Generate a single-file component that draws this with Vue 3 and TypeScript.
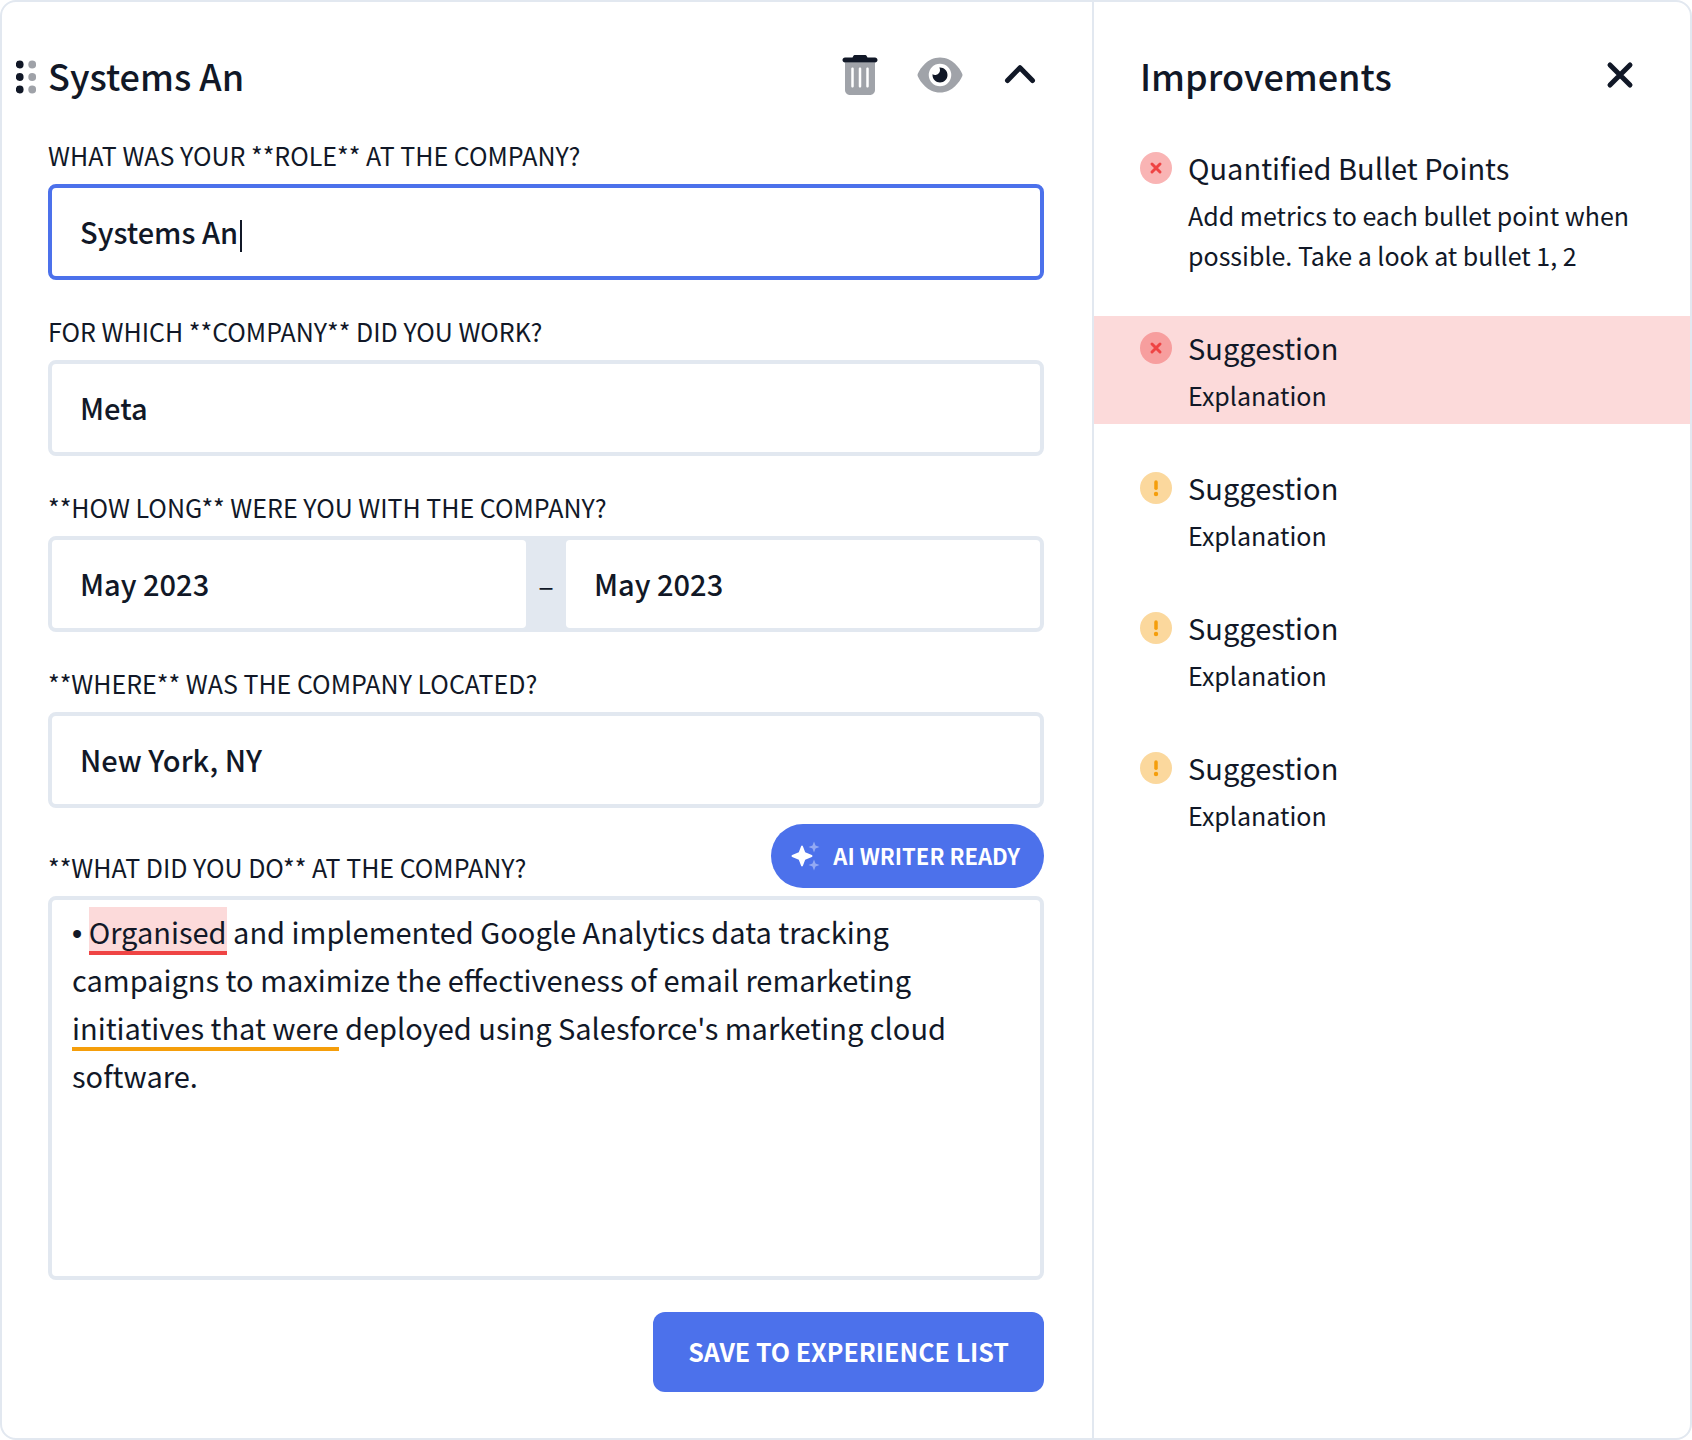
<script setup lang="ts">
import { onMounted, ref } from 'vue'

type Severity = 'error' | 'warning'

interface Improvement {
  title: string
  detail: string
  severity: Severity
  active?: boolean
}

const role = ref('Systems An')
const company = ref('Meta')
const startDate = ref('May 2023')
const endDate = ref('May 2023')
const location = ref('New York, NY')
const roleInput = ref<HTMLInputElement | null>(null)

const improvements: Improvement[] = [
  {
    title: 'Quantified Bullet Points',
    detail: 'Add metrics to each bullet point when possible. Take a look at bullet 1, 2',
    severity: 'error',
  },
  { title: 'Suggestion', detail: 'Explanation', severity: 'error', active: true },
  { title: 'Suggestion', detail: 'Explanation', severity: 'warning' },
  { title: 'Suggestion', detail: 'Explanation', severity: 'warning' },
  { title: 'Suggestion', detail: 'Explanation', severity: 'warning' },
]

onMounted(() => roleInput.value?.focus())
</script>

<template>
  <main class="card">
    <form class="form" @submit.prevent>
      <header class="head form-head">
        <button type="button" class="icon-button grip" aria-label="Reorder">
          <svg width="20" height="38" viewBox="0 -4 20 38">
            <g fill="currentColor">
              <circle cx="3.700" cy="4.500" r="3.900" /><circle cx="3.700" cy="17" r="3.900" /><circle cx="3.700" cy="29.500" r="3.900" />
            </g>
            <g fill="currentColor" opacity="0.4">
              <circle cx="16.200" cy="4.500" r="3.900" /><circle cx="16.200" cy="17" r="3.900" /><circle cx="16.200" cy="29.500" r="3.900" />
            </g>
          </svg>
        </button>
        <h1 class="title">{{ role }}</h1>
        <div class="actions">
          <button type="button" class="icon-button" aria-label="Delete">
            <svg width="36" height="40" viewBox="0 0 448 512" fill="currentColor">
              <path opacity="0.4" fill-rule="evenodd" d="M32 96V448c0 35.300 28.700 64 64 64H352c35.300 0 64-28.700 64-64V96H32zM128 160c8.800 0 16 7.200 16 16V400c0 8.800-7.200 16-16 16s-16-7.200-16-16V176c0-8.800 7.200-16 16-16zm96 0c8.800 0 16 7.200 16 16V400c0 8.800-7.200 16-16 16s-16-7.200-16-16V176c0-8.800 7.200-16 16-16zm96 0c8.800 0 16 7.200 16 16V400c0 8.800-7.200 16-16 16s-16-7.200-16-16V176c0-8.800 7.200-16 16-16z" />
              <path d="M135.200 17.700L128 32H32C14.300 32 0 46.300 0 64S14.300 96 32 96H416c17.700 0 32-14.300 32-32s-14.300-32-32-32H320l-7.200-14.300C307.400 6.800 296.300 0 284.200 0H163.800c-12.100 0-23.200 6.800-28.600 17.700z" />
            </svg>
          </button>
          <button type="button" class="icon-button" aria-label="Preview">
            <svg width="46" height="40" viewBox="0 0 576 512" fill="currentColor">
              <path opacity="0.4" fill-rule="evenodd" d="M288 32c-80.800 0-145.500 36.800-192.600 80.600C48.600 156 17.300 208 2.500 243.700c-3.300 7.900-3.300 16.700 0 24.600C17.300 304 48.600 356 95.400 399.400C142.500 443.200 207.200 480 288 480s145.500-36.800 192.600-80.600c46.800-43.500 78.100-95.400 93-131.100c3.300-7.900 3.300-16.700 0-24.600c-14.900-35.700-46.200-87.700-93-131.100C433.500 68.800 368.800 32 288 32zM144 256a144 144 0 1 1 288 0 144 144 0 1 1-288 0z" />
              <path d="M288 192c0 35.300-28.700 64-64 64-11.500 0-22.300-3-31.700-8.400-.2 2.800-.3 5.500-.3 8.400 0 53 43 96 96 96s96-43 96-96-43-96-96-96c-2.800 0-5.600.1-8.400.3 5.300 9.300 8.400 20.100 8.400 31.700z" />
            </svg>
          </button>
          <button type="button" class="icon-button" aria-label="Collapse">
            <svg width="40" height="40" viewBox="0 0 40 40" fill="none" stroke="currentColor" stroke-width="5" stroke-linecap="round" stroke-linejoin="round">
              <path d="M7.500 25.500L20 12.700L32.500 25.500" />
            </svg>
          </button>
        </div>
      </header>

      <div class="field">
        <label for="role">WHAT WAS YOUR **ROLE** AT THE COMPANY?</label>
        <div class="typing">
          <input id="role" ref="roleInput" v-model="role" class="box text active" type="text" />
          <div class="caret-layer text" aria-hidden="true">
            <span class="ghost">{{ role }}</span><span class="caret"></span>
          </div>
        </div>
      </div>

      <div class="field">
        <label for="company">FOR WHICH **COMPANY** DID YOU WORK?</label>
        <input id="company" v-model="company" class="box text" type="text" />
      </div>

      <div class="field">
        <label for="start">**HOW LONG** WERE YOU WITH THE COMPANY?</label>
        <div class="box range">
          <input id="start" v-model="startDate" class="text" type="text" />
          <span class="dash">–</span>
          <input v-model="endDate" class="text" type="text" aria-label="End date" />
        </div>
      </div>

      <div class="field">
        <label for="location">**WHERE** WAS THE COMPANY LOCATED?</label>
        <input id="location" v-model="location" class="box text" type="text" />
      </div>

      <div class="field duties">
        <div class="duties-head">
          <label id="duties-label">**WHAT DID YOU DO** AT THE COMPANY?</label>
          <button type="button" class="ai">
            <svg width="30" height="30" viewBox="0 0 30 30" fill="#fff">
              <path d="M11 4.500Q11.600 4.500 11.900 5.200L14.200 11.300L20.800 14Q21.500 14.400 21.500 15T20.800 16L14.200 18.700L11.900 24.800Q11.600 25.500 11 25.500T10.100 24.800L7.800 18.700L1.200 16Q.5 15.600 .5 15T1.200 14L7.800 11.300L10.100 5.200Q10.400 4.500 11 4.500z" />
              <g opacity="0.4">
                <path d="M23 .5L24.500 4.500L28.500 6L24.500 7.500L23 11.500L21.500 7.500L17.500 6L21.500 4.500z" />
                <path d="M23 18.500L24.500 22.500L28.500 24L24.500 25.500L23 29.500L21.500 25.500L17.500 24L21.500 22.500z" />
              </g>
            </svg>
            <span>AI WRITER READY</span>
          </button>
        </div>
        <div class="box editor" role="textbox" aria-multiline="true" aria-labelledby="duties-label" contenteditable="true" spellcheck="false"><span class="bullet">•</span> <span class="mark error">Organised</span> and implemented Google Analytics data tracking campaigns to maximize the effectiveness of email remarketing <span class="mark warning">initiatives that were</span> deployed using Salesforce's marketing cloud software.</div>
      </div>

      <button type="submit" class="save">SAVE TO EXPERIENCE LIST</button>
    </form>

    <aside class="side">
      <header class="head side-head">
        <h2 class="title">Improvements</h2>
        <button type="button" class="icon-button" aria-label="Close">
          <svg width="40" height="40" viewBox="0 0 40 40" fill="none" stroke="currentColor" stroke-width="5" stroke-linecap="round">
            <path d="M10 10L30 30M30 10L10 30" />
          </svg>
        </button>
      </header>
      <ul class="list">
        <li v-for="(item, i) in improvements" :key="i" class="item" :class="{ highlighted: item.active }">
          <svg class="badge" :class="item.severity" width="32" height="32" viewBox="0 0 32 32" fill="none" stroke="currentColor" stroke-linecap="round">
            <circle cx="16" cy="16" r="16" fill="currentColor" stroke="none" opacity="0.4" />
            <path v-if="item.severity === 'error'" stroke-width="3" d="M12 12L20 20M20 12L12 20" />
            <template v-else>
              <path stroke-width="3.500" d="M16 10V16.200" />
              <circle cx="16" cy="22" r="2.200" fill="currentColor" stroke="none" />
            </template>
          </svg>
          <div class="copy">
            <h3>{{ item.title }}</h3>
            <p>{{ item.detail }}</p>
          </div>
        </li>
      </ul>
    </aside>
  </main>
</template>

<style>
body {
  margin: 0;
  background: #fff;
}
</style>

<style scoped>
* {
  box-sizing: border-box;
}

.card {
  display: flex;
  min-height: 100vh;
  border: 2px solid #e2e8f0;
  border-radius: 16px;
  overflow: hidden;
  background: #fff;
  color: #111827;
  font-family: 'Noto Sans CJK SC', 'Noto Sans', sans-serif;
  font-size: 29px;
}

button,
input {
  font: inherit;
  color: inherit;
}

button {
  border: 0;
  padding: 0;
  background: none;
  cursor: pointer;
}

h1,
h2,
h3,
p,
ul {
  margin: 0;
  padding: 0;
}

.form {
  flex: 1;
  min-width: 0;
  display: flex;
  flex-direction: column;
  gap: 32px;
  padding: 46px 48px 46px 46px;
}

.head {
  display: flex;
  align-items: center;
  height: 56px;
  padding-bottom: 2px;
}

.form-head {
  gap: 12px;
  margin-left: -32px;
}

.title {
  flex: 1;
  font-size: 36px;
  line-height: 54px;
  font-weight: 500;
}

.actions {
  display: flex;
  gap: 32px;
}

.icon-button {
  display: flex;
  align-items: center;
  justify-content: center;
  width: 48px;
  height: 54px;
}

.grip {
  width: 20px;
  cursor: grab;
}

.field {
  display: flex;
  flex-direction: column;
  gap: 8px;
}

label {
  padding-bottom: 2px;
  font-size: 25px;
  line-height: 38px;
}

.box {
  width: 100%;
  border: 4px solid #e2e8f0;
  border-radius: 8px;
  background: #fff;
}

.text {
  height: 96px;
  padding: 0 28px 2px;
  outline: 0;
  font-weight: 500;
}

.text.active {
  border-color: #4c71eb;
  caret-color: transparent;
}

.typing {
  position: relative;
  display: flex;
}

/* Thick caret that follows the typed text */
.caret-layer {
  position: absolute;
  inset: 0;
  display: flex;
  align-items: center;
  gap: 2px;
  padding: 8px 32px 0;
  pointer-events: none;
}

.ghost {
  visibility: hidden;
  white-space: pre;
}

.caret {
  width: 2px;
  height: 32px;
  background: #111827;
}

.range {
  display: flex;
  background: #e2e8f0;
}

.range .text {
  flex: 1;
  min-width: 0;
  height: 88px;
  border: 0;
  border-radius: 4px;
  background: #fff;
}

.dash {
  width: 40px;
  line-height: 88px;
  text-align: center;
}

.duties {
  margin-top: -16px;
}

.duties-head {
  display: flex;
  justify-content: space-between;
  align-items: flex-end;
}

.ai {
  display: flex;
  align-items: center;
  gap: 12px;
  height: 64px;
  padding: 0 24px 0 20px;
  border-radius: 32px;
  background: #4c71eb;
  color: #fff;
  font-size: 22px;
  font-weight: 700;
}

.ai span {
  padding-bottom: 2px;
}

.editor {
  height: 384px;
  padding: 7px 20px;
  line-height: 48px;
  outline: 0;
}

.bullet {
  font-family: 'Liberation Sans', Arial, sans-serif;
  line-height: 1;
}

.mark {
  padding: 3px 0;
}

.mark.error {
  background: rgba(239, 68, 68, 0.2);
  box-shadow: inset 0 -4px #ef4444;
}

.mark.warning {
  box-shadow: inset 0 -4px #f59e0b;
}

.save {
  align-self: flex-end;
  height: 80px;
  padding: 0 35px 2px;
  border-radius: 12px;
  background: #4c71eb;
  color: #fff;
  font-size: 25px;
  font-weight: 700;
}

.side {
  width: 598px;
  flex-shrink: 0;
  border-left: 2px solid #e2e8f0;
}

.side-head {
  margin: 46px 46px 32px;
}

.list {
  display: flex;
  flex-direction: column;
  gap: 32px;
  list-style: none;
}

.item {
  display: flex;
  gap: 16px;
  padding: 11px 46px 9px;
}

.item.highlighted {
  background: rgba(239, 68, 68, 0.2);
}

.badge {
  flex-shrink: 0;
  margin-top: 5px;
}

.badge.error {
  color: #ef4444;
}

.badge.warning {
  color: #f59e0b;
}

.copy {
  display: flex;
  flex-direction: column;
  gap: 8px;
}

h3 {
  font-size: 29px;
  font-weight: 400;
  line-height: 40px;
}

p {
  font-size: 25px;
  line-height: 40px;
}
</style>
